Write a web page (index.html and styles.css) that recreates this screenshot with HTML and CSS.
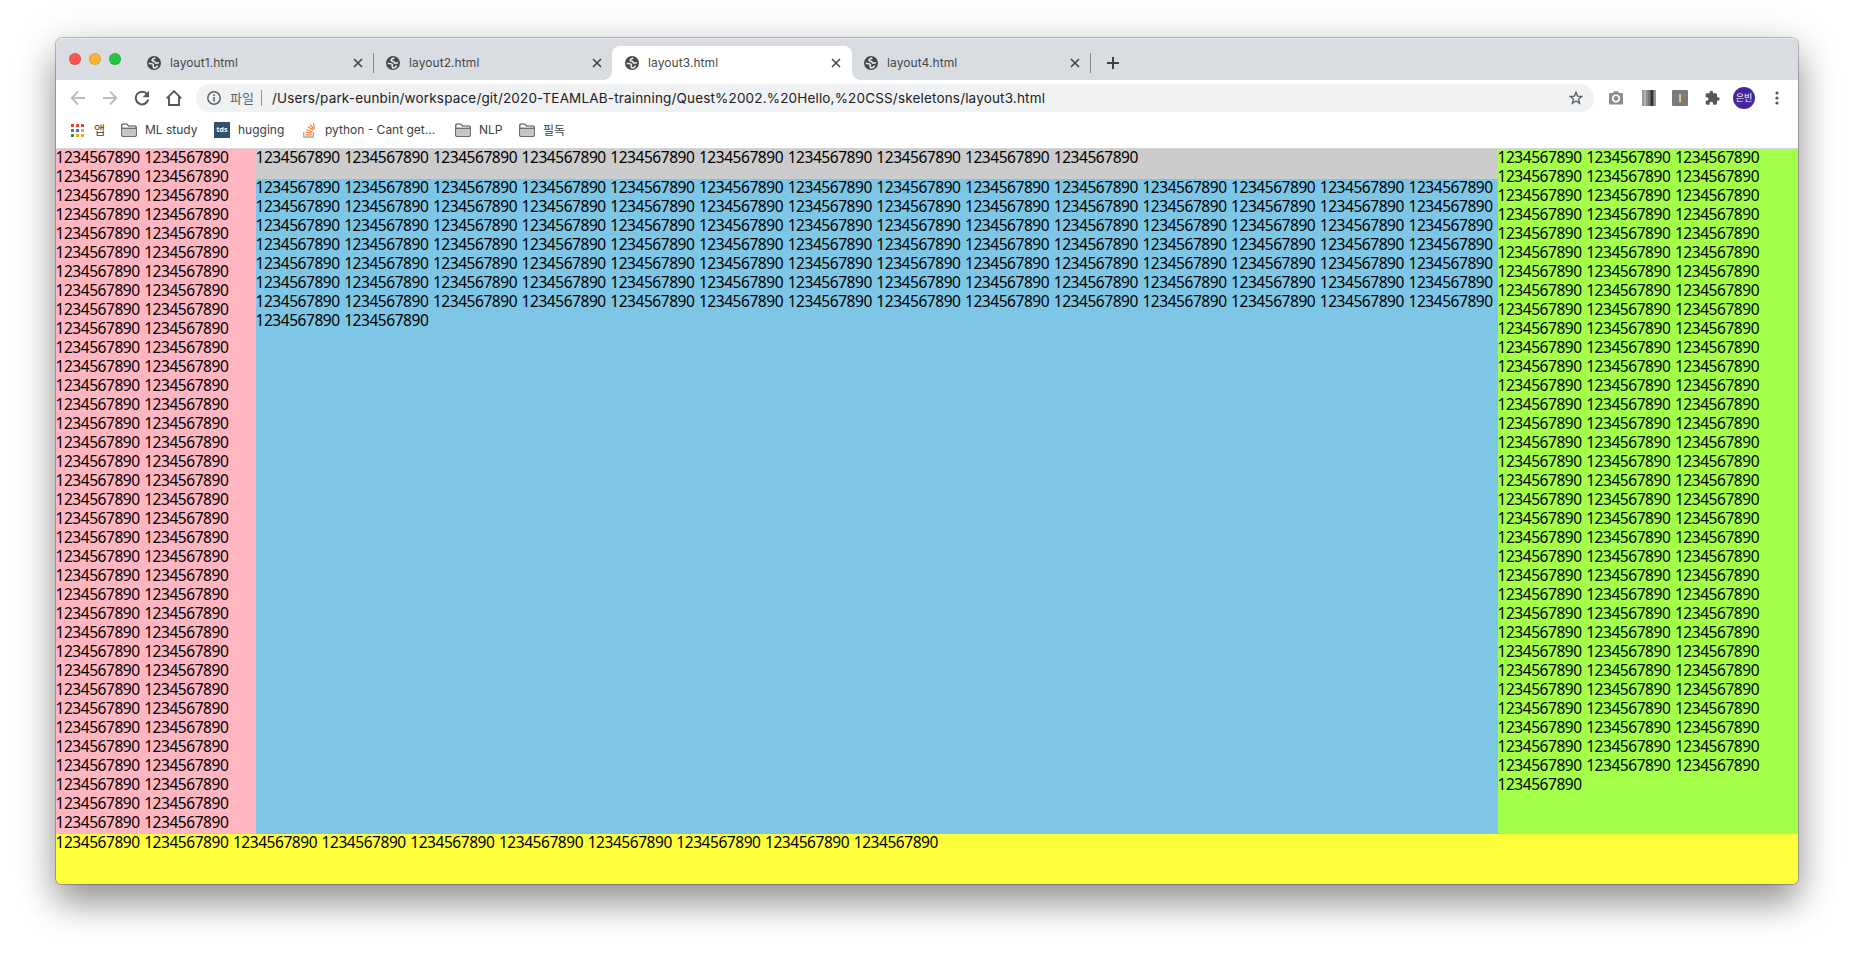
FILE: index.html
```html
<!DOCTYPE html>
<html lang="ko">
<head>
<meta charset="utf-8">
<title>layout3.html</title>
<link rel="stylesheet" href="styles.css">
</head>
<body>
<svg class="defs" width="0" height="0">
  <symbol id="globe" viewBox="0 0 14 14"><circle cx="7" cy="7" r="7" fill="#45494e"/><path d="M8.300 1.900C7 2.500 5.300 2.800 5.100 4.100c-.1 1.200 1.200 1.200 2.300 1.300.9.100.5 1.500 1.500 1.700.9.100 1.700-.4 3.100-.3M1.700 7.400c1.900.1 4.200-.2 4.700 1 .3.900-.7 1.200-.3 2.100.2.600.9.600.9 1.500 2 0 3-.9 3.600-2.500" fill="none" stroke="#e6e8eb" stroke-width="1.600"/></symbol>
  <symbol id="close" viewBox="0 0 10 10"><path d="M1 1l8 8M9 1L1 9" stroke="#3c4043" stroke-width="1.500"/></symbol>
  <symbol id="folder" viewBox="0 0 16 14"><path d="M.8 12.500V2q0-1 1-1h4l1.700 2h6.700q1 0 1 1v8.500q0 .7-1 .7H1.800q-1 0-1-.7z" fill="#fff" stroke="#3c4043" stroke-width="1.100"/><path d="M1.400 5.500h13.200v7.100H1.400z" fill="#c6c6c6"/><path d="M1 5.200h14" stroke="#3c4043"/></symbol>
</svg>
<div class="window">
  <div class="tabs">
    <div class="lights"><i class="red"></i><i class="amber"></i><i class="green"></i></div>
    <div class="tab"><svg class="fav"><use href="#globe"/></svg><span>layout1.html</span><svg class="close"><use href="#close"/></svg></div>
    <div class="tab divided"><svg class="fav"><use href="#globe"/></svg><span>layout2.html</span><svg class="close"><use href="#close"/></svg></div>
    <div class="tab active"><svg class="fav"><use href="#globe"/></svg><span>layout3.html</span><svg class="close"><use href="#close"/></svg></div>
    <div class="tab"><svg class="fav"><use href="#globe"/></svg><span>layout4.html</span><svg class="close"><use href="#close"/></svg></div>
    <div class="newtab"><svg width="12" height="12" viewBox="0 0 12 12"><path d="M6 0v12M0 6h12" stroke="#3c4043" stroke-width="2"/></svg></div>
  </div>
  <div class="toolbar">
    <div class="nav">
      <svg width="16" height="16" viewBox="0 0 16 16" fill="none" stroke="#b9bbbe" stroke-width="1.800"><path d="M15 8H2M8 1.500L1.700 8 8 14.500"/></svg>
      <svg width="16" height="16" viewBox="0 0 16 16" fill="none" stroke="#b9bbbe" stroke-width="1.800"><path d="M1 8h13M8 1.500L14.300 8 8 14.500"/></svg>
      <svg width="16" height="16" viewBox="0 0 16 16"><path d="M13.200 4.400A6.300 6.300 0 1 0 14.200 9.500" fill="none" stroke="#54585d" stroke-width="2"/><path d="M15 .8v6.500H8.500z" fill="#54585d"/></svg>
      <svg width="16" height="16" viewBox="0 0 16 16"><path d="M.8 8.400L8 1.200l7.200 7.200M3 7v8h10V7" fill="none" stroke="#54585d" stroke-width="1.900"/></svg>
    </div>
    <div class="omnibox">
      <svg width="14" height="14" viewBox="0 0 14 14"><circle cx="7" cy="7" r="6.200" fill="none" stroke="#5f6368" stroke-width="1.500"/><path d="M7 6v4.500M7 3.300v1.600" stroke="#5f6368" stroke-width="1.600"/></svg>
      <span class="scheme">파일</span>
      <span class="url">/Users/park-eunbin/workspace/git/2020-TEAMLAB-trainning/Quest%2002.%20Hello,%20CSS/skeletons/layout3.html</span>
      <svg class="star" width="14" height="14" viewBox="0 0 14 14"><path d="M7 1.200l1.600 3.900 4.300.3-3.300 2.700 1.100 4.200L7 10l-3.700 2.300 1.100-4.200L1.100 5.400l4.300-.3z" fill="none" stroke="#54585d" stroke-width="1.300"/></svg>
    </div>
    <div class="extensions">
      <svg width="14" height="14" viewBox="0 0 14 14"><path d="M1 2h3l1-1.800h4L10 2h3q1 0 1 1v9.500q0 1-1 1H1q-1 0-1-1V3q0-1 1-1z" fill="#8d8d8d"/><circle cx="7" cy="7.500" r="3.200" fill="#8d8d8d" stroke="#fff" stroke-width="1.600"/></svg>
      <span class="bars"></span>
      <span class="letter">I</span>
      <svg class="puzzle" width="16" height="16" viewBox="0 0 24 24"><path d="M21 11h-1.500V7a2 2 0 0 0-2-2h-4V3.500a2.500 2.500 0 0 0-5 0V5h-4a2 2 0 0 0-2 2v3.800H4a2.700 2.700 0 0 1 0 5.400H2.500V20a2 2 0 0 0 2 2h3.800v-1.500a2.700 2.700 0 0 1 5.400 0V22h3.800a2 2 0 0 0 2-2v-4H21a2.500 2.500 0 0 0 0-5z" fill="#54585d"/></svg>
      <span class="avatar">은빈</span>
      <svg width="4" height="14" viewBox="0 0 4 14" fill="#54585d"><circle cx="2" cy="2" r="1.600"/><circle cx="2" cy="7" r="1.600"/><circle cx="2" cy="12" r="1.600"/></svg>
    </div>
  </div>
  <div class="bookmarks">
    <div class="bm apps"><svg width="13" height="13" viewBox="0 0 13 13"><path d="M0 0h3v3H0zM5 0h3v3H5zM10 0h3v3h-3z" fill="#ea4335"/><path d="M0 5h3v3H0zM0 10h3v3H0z" fill="#2f9252"/><path d="M5 5h3v3H5z" fill="#1a83f0"/><path d="M10 5h3v3h-3zM5 10h3v3H5zM10 10h3v3h-3z" fill="#f0a428"/></svg><span>앱</span></div>
    <div class="bm ml"><svg class="folder"><use href="#folder"/></svg><span>ML study</span></div>
    <div class="bm hug"><b class="tds">tds</b><span>hugging</span></div>
    <div class="bm py"><svg width="12" height="15" viewBox="0 0 12 15" fill="none"><path d="M.7 9v5h9.600V9" stroke="#a5a7aa" stroke-width="1.300"/><path d="M2.400 11.800h6.300M2.600 9.200l6.200 1M3.400 6.500l5.800 2.200M5 3.600l5 3.700M7.300 1.600l3.500 4.800M10.500.2l.9 5.500" stroke="#f4803a" stroke-width="1.200"/></svg><span>python - Cant get...</span></div>
    <div class="bm nlp"><svg class="folder"><use href="#folder"/></svg><span>NLP</span></div>
    <div class="bm must"><svg class="folder"><use href="#folder"/></svg><span>필독</span></div>
  </div>
  <div class="page">
    <nav class="left"><p data-repeat="72"></p></nav>
    <header class="head"><p data-repeat="10"></p></header>
    <main class="main"><p data-repeat="100"></p></main>
    <aside class="right"><p data-repeat="100"></p></aside>
    <footer class="foot"><p data-repeat="10"></p></footer>
  </div>
</div>
<script src="fill.js"></script>
</body>
</html>
```
FILE: fill.js
```js
// Fill every layout region with its number of sample words.
document.querySelectorAll('[data-repeat]').forEach(function (el) {
  el.textContent = Array(Number(el.dataset.repeat)).fill('1234567890').join(' ');
});
```
FILE: styles.css
```css
* { box-sizing: border-box; }
html, body { margin: 0; height: 100%; overflow: hidden; background: #fff; }
body { padding: 38px 56px 74px; font-family: Inter, "Noto Sans CJK KR", sans-serif; }
.defs { display: none; }
svg { flex: none; display: block; }
.window {
  display: flex; flex-direction: column; height: 846px; overflow: hidden;
  border-radius: 6px; background: #fff;
  box-shadow: 0 0 0 1px rgba(0,0,0,.24), 0 20px 34px rgba(0,0,0,.34), 0 6px 46px rgba(0,0,0,.16);
}
.tabs { display: flex; height: 42px; background: #d9dce1; box-shadow: inset 0 1px #eceef0; }
.lights { display: flex; gap: 8px; width: 78px; padding: 15px 0 0 13px; }
.lights i { width: 12px; height: 12px; border-radius: 50%; border: 1px solid rgba(0,0,0,.12); }
.red { background: #fc5650; }
.amber { background: #fdb537; }
.green { background: #29c440; }
.tab {
  display: flex; align-items: center; width: 239px; height: 34px; margin-top: 8px;
  padding: 0 11px 0 13px; font-size: 12px; color: #45494d; position: relative;
}
.tab span { margin-left: 9px; padding-bottom: 2px; flex: 1; letter-spacing: .08px; }
.fav { width: 14px; height: 14px; }
.close { width: 10px; height: 10px; margin-right: -1px; }
.divided::before { content: ""; position: absolute; left: 0; top: 7px; width: 1px; height: 20px; background: #85888c; }
.active { background: #fff; border-radius: 8px 8px 0 0; box-shadow: 1px 0 #fff; }
.active::before, .active::after { content: ""; position: absolute; bottom: 0; width: 8px; height: 8px; }
.active::before { left: -8px; background: radial-gradient(circle at 0 0, transparent 7.5px, #fff 8px); }
.active::after { right: -9px; background: radial-gradient(circle at 100% 0, transparent 7.5px, #fff 8px); }
.newtab { height: 20px; margin-top: 15px; padding: 4px 0 0 16px; border-left: 1px solid #85888c; }
.toolbar { display: flex; align-items: center; height: 36px; }
.nav { display: flex; gap: 16px; width: 140px; padding-left: 14px; }
.omnibox {
  display: flex; align-items: center; width: 1398px; height: 28px; padding: 0 11px;
  border-radius: 14px; background: #f0f1f3; font-size: 13.500px; color: #202124;
}
.scheme { margin-left: 9px; padding-right: 7px; border-right: 1px solid #8e9195; line-height: 16px; font-size: 13px; color: #5f6368; }
.url { margin-left: 10px; white-space: nowrap; letter-spacing: .168px; }
.star { margin-left: auto; }
.extensions { display: flex; align-items: center; }
.extensions > svg:first-child { margin-left: 15px; }
.bars { width: 14px; height: 16px; margin-left: 19px; background: linear-gradient(90deg, #999 0 2px, #b2b2b2 2px 4px, #8c8c8c 4px 6px, #777 6px 8px, #555 8px 9px, #333 9px 11px, #666 11px 12px, #999 12px); }
.letter { width: 16px; height: 16px; margin-left: 16px; border-radius: 1px; background: #7b7b7b; color: #fff; font-size: 11px; line-height: 16px; text-align: center; }
.puzzle { margin-left: 16px; }
.avatar { width: 22px; height: 22px; margin: 0 20px 0 13px; border-radius: 50%; background: #46279b; color: #fff; font-size: 9px; line-height: 22px; text-align: center; white-space: nowrap; }
.bookmarks { display: flex; align-items: center; height: 33px; padding: 0 0 4px 15px; border-bottom: 1px solid #d6d7d9; font-size: 12px; color: #3c4043; }
.bm { display: flex; align-items: center; white-space: nowrap; }
.bm span { padding-bottom: 1px; }
.apps { width: 50px; gap: 10px; }
.ml { width: 93px; gap: 8px; }
.hug { width: 89px; gap: 8px; }
.py { width: 152px; gap: 10px; }
.nlp { width: 64px; gap: 8px; }
.must { gap: 8px; }
.folder { width: 16px; height: 14px; }
.tds { width: 16px; height: 16px; background: #315069; color: #fff; font: bold 7px/15px "Open Sans", sans-serif; text-align: center; }
.page {
  flex: 1; display: grid; grid-template-columns: 200px 1fr 300px; grid-template-rows: 30px 1fr 50px;
  grid-template-areas: "left head right" "left main right" "foot foot foot";
  font: 15.5px/19px "Noto Sans", sans-serif; letter-spacing: -.450px; word-spacing: .950px; color: #000;
}
.page p { margin: -1px 0 0 -.5px; }
.left { grid-area: left; background: #ffb6c1; }
.head { grid-area: head; background: #ccc; }
.main { grid-area: main; background: #7dc6e5; }
.right { grid-area: right; background: #a3ff47; }
.foot { grid-area: foot; background: #ffff3b; }
```
